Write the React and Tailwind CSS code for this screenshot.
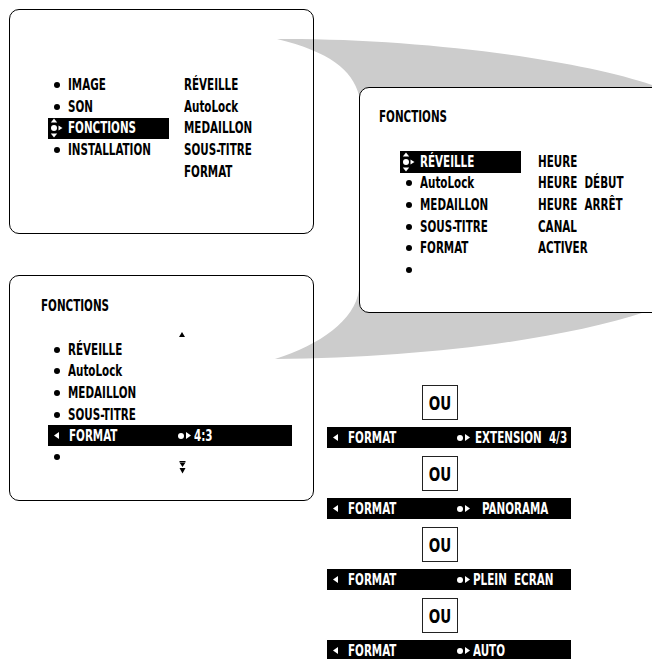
import React from 'react'

const FONT = "font-['DejaVu_Sans_Condensed','DejaVu_Sans',sans-serif]"

// the manual uses a very narrow face; squeeze the condensed one to match
function T({ children, className = '' }) {
  return <span className={`inline-block origin-left scale-x-[0.72] whitespace-pre ${className}`}>{children}</span>
}

function Dot({ white }) {
  return <span className={`block h-[6px] w-[6px] rounded-full ${white ? 'bg-white' : 'bg-black'}`} />
}

function NavIcon() {
  return (
    <svg width="15" height="20" viewBox="0 0 15 20" fill="white" className="block">
      <path d="M4 0.5 L7.2 4.5 L0.8 4.5 Z" />
      <circle cx="4" cy="10" r="3" />
      <path d="M0.8 15.5 L7.2 15.5 L4 19.5 Z" />
      <path d="M8.5 7.5 L12.5 10 L8.5 12.5 Z" />
    </svg>
  )
}

function TriLeft() {
  return (
    <svg width="5" height="7" viewBox="0 0 5 7" fill="white" className="block">
      <path d="M0 3.5 L5 0 L5 7 Z" />
    </svg>
  )
}

function TriRight() {
  return (
    <svg width="5" height="7" viewBox="0 0 5 7" fill="white" className="block">
      <path d="M0 0 L5 3.5 L0 7 Z" />
    </svg>
  )
}

function MenuRow({ label, active }) {
  return (
    <div className={`flex h-[21.6px] items-center ${active ? 'bg-black text-white' : ''}`}>
      <span className={`flex w-[20px] shrink-0 items-center ${active ? 'pl-[2px]' : 'pl-[6px]'}`}>
        {active ? <NavIcon /> : <Dot />}
      </span>
      <T>{label}</T>
    </div>
  )
}

function Row({ label }) {
  return (
    <div className="flex h-[21.6px] items-center">
      <T>{label}</T>
    </div>
  )
}

function FormatBar({ value, shift = '' }) {
  return (
    <div className="flex h-[21px] w-[244px] items-center bg-black text-white">
      <span className="w-[21px] shrink-0 pl-[6px]">
        <TriLeft />
      </span>
      <span className="w-[109px] shrink-0">
        <T>FORMAT</T>
      </span>
      <span className="flex w-[16px] shrink-0 items-center gap-[2px]">
        <Dot white />
        <TriRight />
      </span>
      <T className={shift}>{value}</T>
    </div>
  )
}

function Ou() {
  return (
    <div className="ml-[95px] flex h-[35px] w-[36px] items-center justify-center border border-[#222] text-[20px]">
      <span className="inline-block scale-x-[0.75]">OU</span>
    </div>
  )
}

export default function App() {
  return (
    <div className={`relative h-[659px] w-[652px] overflow-hidden bg-white text-[16px] font-bold text-black ${FONT}`}>
      <svg className="absolute inset-0" width="652" height="659" viewBox="0 0 652 659">
        <path
          d="M277 39 C420 38 580 60 652 85 L652 100 L359 100 L359 95 C352 70 330 52 277 39 Z"
          fill="#cccccc"
        />
        <path
          d="M275 359 C420 358 560 340 645 312 L645 300 L359 300 L359 290 C355 320 320 345 275 359 Z"
          fill="#cccccc"
        />
      </svg>

      {/* main menu */}
      <div className="absolute left-[9px] top-[9px] h-[225px] w-[305px] rounded-[10px] border-[1.5px] border-black pl-[38px] pt-[64.5px]">
        <div className="flex">
          <div className="w-[121px]">
            <MenuRow label="IMAGE" />
            <MenuRow label="SON" />
            <MenuRow label="FONCTIONS" active />
            <MenuRow label="INSTALLATION" />
          </div>
          <div className="ml-[15px]">
            <Row label="RÉVEILLE" />
            <Row label="AutoLock" />
            <Row label="MEDAILLON" />
            <Row label="SOUS-TITRE" />
            <Row label="FORMAT" />
          </div>
        </div>
      </div>

      {/* fonctions menu */}
      <div className="absolute left-[359px] top-[87px] h-[226px] w-[310px] rounded-[10px] border-[1.5px] border-black bg-white pt-[18px]">
        <div className="pl-[19px]">
          <Row label="FONCTIONS" />
        </div>
        <div className="mt-[23.5px] flex pl-[40px]">
          <div className="w-[121px]">
            <MenuRow label="RÉVEILLE" active />
            <MenuRow label="AutoLock" />
            <MenuRow label="MEDAILLON" />
            <MenuRow label="SOUS-TITRE" />
            <MenuRow label="FORMAT" />
            <MenuRow label="" />
          </div>
          <div className="ml-[17px]">
            <Row label="HEURE" />
            <Row label="HEURE  DÉBUT" />
            <Row label="HEURE  ARRÊT" />
            <Row label="CANAL" />
            <Row label="ACTIVER" />
          </div>
        </div>
      </div>

      {/* format submenu */}
      <div className="absolute left-[9px] top-[275px] h-[226px] w-[305px] rounded-[10px] border-[1.5px] border-black pl-[38px] pt-[19.5px]">
        <div className="-ml-[7px]">
          <Row label="FONCTIONS" />
        </div>
        <div className="h-[22px] pl-[131px] pt-[15px]">
          <svg width="6" height="5" viewBox="0 0 6 5" className="block">
            <path d="M3 0 L6 5 L0 5 Z" fill="black" />
          </svg>
        </div>
        <div className="w-[121px]">
          <MenuRow label="RÉVEILLE" />
          <MenuRow label="AutoLock" />
          <MenuRow label="MEDAILLON" />
          <MenuRow label="SOUS-TITRE" />
        </div>
        <FormatBar value="4:3" />
        <div className="flex h-[22px] items-center">
          <span className="w-[131px] pl-[6px]">
            <Dot />
          </span>
          <svg width="7" height="13" viewBox="0 0 7 13" className="relative top-[10px] block">
            <rect x="0.5" y="0" width="6" height="1.2" fill="black" />
            <path d="M0.5 1.5 L6.5 1.5 L3.5 6 Z M0.5 7 L6.5 7 L3.5 12.5 Z" fill="black" />
          </svg>
        </div>
      </div>

      {/* alternatives */}
      <div className="absolute left-[327px] top-[385px] flex flex-col">
        <Ou />
        <div className="mb-[8px] mt-[7px]">
          <FormatBar value="EXTENSION  4/3" shift="ml-[2px]" />
        </div>
        <Ou />
        <div className="mb-[8px] mt-[7px]">
          <FormatBar value="PANORAMA" shift="ml-[9px]" />
        </div>
        <Ou />
        <div className="mb-[8px] mt-[7px]">
          <FormatBar value="PLEIN  ECRAN" />
        </div>
        <Ou />
        <div className="mt-[7px]">
          <FormatBar value="AUTO" />
        </div>
      </div>
    </div>
  )
}
